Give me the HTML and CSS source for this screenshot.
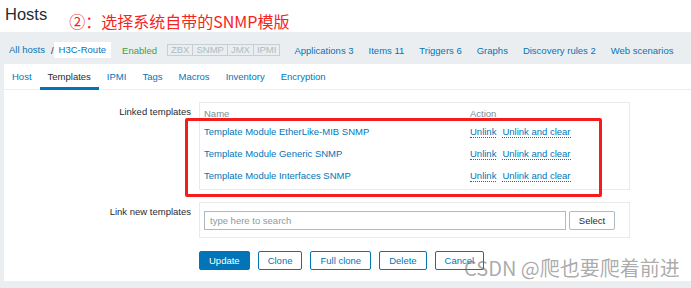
FILE: index.html
```html
<!DOCTYPE html>
<html lang="en">
<head>
<meta charset="utf-8">
<title>Hosts</title>
<link rel="stylesheet" href="styles.css">
</head>
<body>
<header class="page-head">
  <h1 class="title">Hosts</h1>
  <span class="note">②：选择系统自带的SNMP模版</span>
</header>
<main class="main">
  <nav class="host-nav">
    <a class="crumb">All hosts</a>
    <span class="sep">/</span>
    <a class="crumb current">H3C-Route</a>
    <span class="status">Enabled</span>
    <span class="badges"><span class="badge">ZBX</span><span class="badge">SNMP</span><span class="badge">JMX</span><span class="badge">IPMI</span></span>
    <a class="nav-link first">Applications 3</a>
    <a class="nav-link">Items 11</a>
    <a class="nav-link">Triggers 6</a>
    <a class="nav-link">Graphs</a>
    <a class="nav-link">Discovery rules 2</a>
    <a class="nav-link">Web scenarios</a>
  </nav>
  <section class="panel">
    <ul class="tabs">
      <li class="tab">Host</li>
      <li class="tab active">Templates</li>
      <li class="tab">IPMI</li>
      <li class="tab">Tags</li>
      <li class="tab">Macros</li>
      <li class="tab">Inventory</li>
      <li class="tab">Encryption</li>
    </ul>
    <div class="form">
      <div class="label">Linked templates</div>
      <div class="box linked">
        <table class="tpl-table">
          <thead><tr><th class="col-name">Name</th><th>Action</th></tr></thead>
          <tbody>
            <tr><td><a class="link">Template Module EtherLike-MIB SNMP</a></td><td><a class="action">Unlink</a><a class="action">Unlink and clear</a></td></tr>
            <tr><td><a class="link">Template Module Generic SNMP</a></td><td><a class="action">Unlink</a><a class="action">Unlink and clear</a></td></tr>
            <tr><td><a class="link">Template Module Interfaces SNMP</a></td><td><a class="action">Unlink</a><a class="action">Unlink and clear</a></td></tr>
          </tbody>
        </table>
      </div>
      <div class="label">Link new templates</div>
      <div class="box search">
        <input class="input" type="text" placeholder="type here to search">
        <button class="btn-grey">Select</button>
      </div>
      <div class="buttons">
        <button class="btn primary">Update</button>
        <button class="btn">Clone</button>
        <button class="btn">Full clone</button>
        <button class="btn">Delete</button>
        <button class="btn">Cancel</button>
      </div>
    </div>
  </section>
</main>
<div class="highlight"></div>
<div class="watermark">CSDN @爬也要爬着前进</div>
</body>
</html>
```
FILE: styles.css
```css
* { box-sizing: border-box; }
html, body { margin: 0; padding: 0; }
body {
  width: 691px;
  height: 288px;
  overflow: hidden;
  position: relative;
  background: #ffffff;
  font-family: "Liberation Sans", Arial, sans-serif;
  font-size: 9.5px;
  color: #1f2c33;
}
a { color: #0275b8; text-decoration: none; }

.page-head {
  height: 32px;
  display: flex;
  align-items: flex-start;
  padding: 4px 0 0 5px;
}
.title {
  margin: 0;
  font-size: 16.5px;
  line-height: 20px;
  font-weight: normal;
  color: #1f2c33;
}
.note {
  margin: 8px 0 0 22px;
  font-family: "Noto Sans CJK SC", sans-serif;
  font-size: 16px;
  line-height: 18px;
  color: #f5241e;
}

.main {
  background: #ebeef0;
  height: 256px;
  padding: 0 0 0 4px;
}
.host-nav {
  display: flex;
  align-items: center;
  height: 32px;
  padding: 4px 0 0 5px;
  white-space: nowrap;
}
.crumb { line-height: 16px; }
.sep { margin: 0 0 0 6px; color: #1f2c33; }
.crumb.current {
  background: #ffffff;
  padding: 0 5px;
  height: 16px;
}
.status { color: #429e47; margin-left: 11px; }
.badges {
  display: flex;
  margin-left: 10px;
  border: 1px solid #c6cfd4;
  height: 12px;
  align-items: center;
}
.badge {
  color: #aebbc2;
  padding: 0 3px;
  line-height: 10px;
  border-left: 1px solid #c6cfd4;
}
.badge:first-child { border-left: none; }
.nav-link { margin-left: 15px; }
.nav-link.first { margin-left: 14px; }

.panel {
  background: #ffffff;
  height: 217px;
}
.tabs {
  display: flex;
  list-style: none;
  margin: 0;
  padding: 0;
  border-bottom: 1px solid #ebeef0;
}
.tab {
  position: relative;
  height: 25px;
  line-height: 25px;
  padding: 0 8px;
  color: #0275b8;
}
.tab.active { color: #1f2c33; }
.tab.active::after {
  content: "";
  position: absolute;
  left: 0;
  right: 0;
  bottom: -1px;
  height: 3px;
  background: #0275b8;
}

.form {
  display: grid;
  grid-template-columns: 187px 431px;
  column-gap: 8px;
  row-gap: 12px;
  padding-top: 12px;
}
.label {
  text-align: right;
  padding-top: 4px;
  line-height: 12px;
  color: #1f2c33;
}
.box {
  border: 1px solid #e8ebed;
}
.linked { padding: 4px 4px 3px 4px; }
.tpl-table {
  border-collapse: collapse;
  width: 100%;
}
.tpl-table th {
  text-align: left;
  font-weight: normal;
  color: #768d99;
  height: 13px;
  line-height: 13px;
  padding: 0;
}
.tpl-table .col-name { width: 266px; }
.tpl-table td {
  height: 22px;
  padding: 0;
  vertical-align: middle;
}
.action {
  border-bottom: 1px dotted #0275b8;
  margin-right: 6px;
}
.search {
  display: flex;
  align-items: center;
  gap: 3px;
  padding: 8px 4px 7px 4px;
}
.input {
  width: 362px;
  height: 19px;
  border: 1px solid #acbbc2;
  border-radius: 0;
  padding: 0 5px;
  font-family: "Liberation Sans", Arial, sans-serif;
  font-size: 9.5px;
  color: #1f2c33;
  outline: none;
}
.input::placeholder { color: #8b9aa2; }
.btn-grey {
  width: 46px;
  height: 19px;
  border: 1px solid #acbbc2;
  border-radius: 2px;
  background: #ffffff;
  font-family: "Liberation Sans", Arial, sans-serif;
  font-size: 9.5px;
  color: #1f2c33;
  padding: 0;
}
.buttons {
  grid-column: 2;
  display: flex;
  gap: 8px;
  margin-top: 1px;
}
.btn {
  height: 19px;
  padding: 0 9px;
  border: 1px solid #0275b8;
  border-radius: 2px;
  background: #ffffff;
  color: #0275b8;
  font-family: "Liberation Sans", Arial, sans-serif;
  font-size: 9.5px;
}
.btn.primary {
  background: #0275b8;
  color: #ffffff;
}

.highlight {
  position: absolute;
  left: 185px;
  top: 118px;
  width: 417px;
  height: 79px;
  border: 3px solid #f41c1c;
  border-radius: 2px;
}
.watermark {
  position: absolute;
  left: 464px;
  top: 256px;
  font-family: "Noto Sans CJK SC", sans-serif;
  font-size: 20px;
  line-height: 24px;
  color: rgba(100, 100, 100, 0.55);
  white-space: nowrap;
}
```
